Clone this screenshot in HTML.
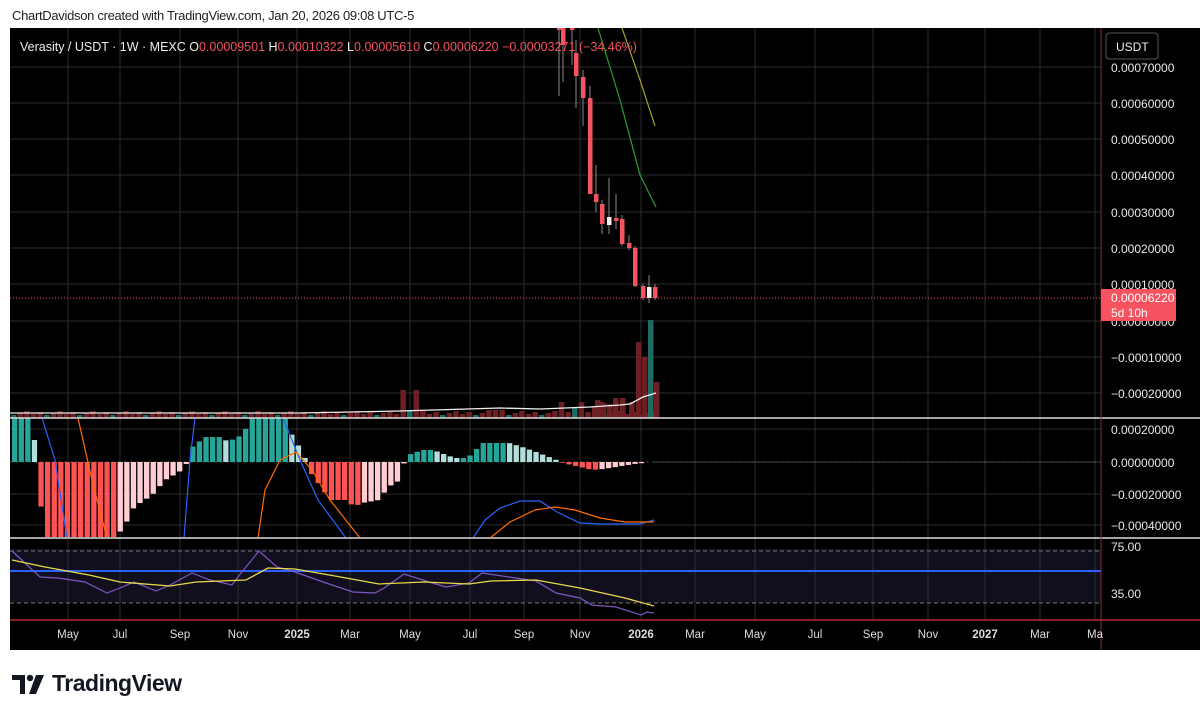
<!DOCTYPE html>
<html><head><meta charset="utf-8"><style>
html,body{margin:0;padding:0;background:#fff;width:1200px;height:716px;overflow:hidden;font-family:"Liberation Sans",sans-serif}
#hdr{position:absolute;left:12px;top:8px;font-size:13px;color:#222;letter-spacing:-0.3px}
#chart{position:absolute;left:10px;top:28px}
#logo{position:absolute;left:12px;top:670px;display:flex;align-items:center}
#logo span{font-size:23px;font-weight:bold;color:#131722;margin-left:6px;letter-spacing:-0.5px}
</style></head><body>
<div id="hdr">ChartDavidson created with TradingView.com, Jan 20, 2026 09:08 UTC-5</div>
<svg id="chart" width="1190" height="622" viewBox="10 28 1190 622" xmlns="http://www.w3.org/2000/svg" font-family="Liberation Sans, sans-serif">
<rect x="10" y="28" width="1190" height="622" fill="#000"/>
<rect x="10" y="549" width="1091" height="54" fill="#110f1e"/>
<g id="grid" stroke="#2c2c2c" stroke-width="1"></g>
<g id="vol"></g>
<g id="candles"></g>
<polyline points="598,28 620,100 640,175 656,207" fill="none" stroke="#2e9e2e" stroke-width="1.2"/>
<polyline points="622,28 640,80 655,126" fill="none" stroke="#a8a030" stroke-width="1.2"/>
<line x1="10" y1="298" x2="1101" y2="298" stroke="#f7525f" stroke-dasharray="1,2" stroke-width="1"/>
<g id="macd"></g>
<g id="rsi"></g>
<line x1="10" y1="418" x2="1200" y2="418" stroke="#ddd" stroke-width="1.5"/>
<line x1="10" y1="538" x2="1200" y2="538" stroke="#ddd" stroke-width="1.5"/>
<line x1="10" y1="620" x2="1200" y2="620" stroke="#8a1f28" stroke-width="2"/>
<line x1="1101" y1="28" x2="1101" y2="650" stroke="#8a2a30" stroke-width="1"/>
<g font-size="12" fill="#e8e8e8">
<text x="1111" y="72">0.00070000</text>
<text x="1111" y="108">0.00060000</text>
<text x="1111" y="144">0.00050000</text>
<text x="1111" y="180">0.00040000</text>
<text x="1111" y="217">0.00030000</text>
<text x="1111" y="253">0.00020000</text>
<text x="1111" y="289">0.00010000</text>
<text x="1111" y="326">0.00000000</text>
<text x="1111" y="362">−0.00010000</text>
<text x="1111" y="398">−0.00020000</text>
<text x="1111" y="434">0.00020000</text>
<text x="1111" y="467">0.00000000</text>
<text x="1111" y="499">−0.00020000</text>
<text x="1111" y="530">−0.00040000</text>
<text x="1111" y="551">75.00</text>
<text x="1111" y="598">35.00</text>
</g>
<rect x="1101" y="289" width="75" height="32" fill="#f7525f"/>
<text x="1111" y="302" font-size="12" fill="#fff">0.00006220</text>
<text x="1111" y="317" font-size="12" fill="#fff">5d 10h</text>
<rect x="1106" y="33" width="52" height="26" rx="3" fill="#000" stroke="#555"/>
<text x="1116" y="51" font-size="12" fill="#eee">USDT</text>
<g font-size="11.5" fill="#ddd" text-anchor="middle">
<text x="68" y="638">May</text><text x="120" y="638">Jul</text><text x="180" y="638">Sep</text><text x="238" y="638">Nov</text>
<text x="297" y="638" font-weight="bold">2025</text><text x="350" y="638">Mar</text><text x="410" y="638">May</text><text x="470" y="638">Jul</text>
<text x="524" y="638">Sep</text><text x="580" y="638">Nov</text><text x="641" y="638" font-weight="bold">2026</text><text x="695" y="638">Mar</text>
<text x="755" y="638">May</text><text x="815" y="638">Jul</text><text x="873" y="638">Sep</text><text x="928" y="638">Nov</text>
<text x="985" y="638" font-weight="bold">2027</text><text x="1040" y="638">Mar</text><text x="1095" y="638">Ma</text>
</g>
<text x="20" y="51" font-size="12.5" fill="#eee">Verasity / USDT · 1W · MEXC  <tspan>O</tspan><tspan fill="#f7525f">0.00009501</tspan>  H<tspan fill="#f7525f">0.00010322</tspan>  L<tspan fill="#f7525f">0.00005610</tspan>  C<tspan fill="#f7525f">0.00006220</tspan>  <tspan fill="#f7525f">−0.00003271 (−34.46%)</tspan></text>
</svg>
<div id="logo">
<svg width="34" height="22" viewBox="0 0 34 22"><path d="M0 2h13v19H8V7H0z" fill="#131722"/><circle cx="18" cy="5" r="3.2" fill="#131722"/><path d="M24 2h8l-8 19h-7z" fill="#131722"/></svg>
<span>TradingView</span>
</div>
<script>
const NS="http://www.w3.org/2000/svg";
function el(p,t,a){const e=document.createElementNS(NS,t);for(const k in a)e.setAttribute(k,a[k]);document.getElementById(p).appendChild(e);return e;}
const vx=[68,120,180,238,297,350,410,470,524,580,641,695,755,815,873,928,985,1040,1095];
vx.forEach(x=>el("grid","line",{x1:x,y1:28,x2:x,y2:620}));
[67,103,139,175,212,248,284,321,357,393,429,494,525].forEach(y=>el("grid","line",{x1:10,y1:y,x2:1101,y2:y}));
el("grid","line",{x1:10,y1:462,x2:1101,y2:462,"stroke-dasharray":"3,3",stroke:"#444"});
el("grid","line",{x1:10,y1:551,x2:1101,y2:551,"stroke-dasharray":"4,3",stroke:"#777"});
el("grid","line",{x1:10,y1:603,x2:1101,y2:603,"stroke-dasharray":"4,3",stroke:"#777"});
el("grid","line",{x1:10,y1:571,x2:1101,y2:571,stroke:"#2962ff","stroke-width":2});
const C=[[557,28,30,28,96,0],[561,28,45,28,82,0],[570,28,30,28,65,0],[574,53,76,40,108,0],[581,77,98,70,126,0],[588,98,194,86,194,0],[594,194,202,165,212,0],[600,204,224,200,234,0],[607,217,225,178,234,1],[614,218,221,194,229,0],[620,219,244,215,246,0],[627,243,248,235,250,0],[633,248,286,246,287,0],[641,286,298,284,300,0],[647,287,298,275,303,1],[653,287,298,284,300,0]];
C.forEach(c=>{const col=c[5]?"#f0f0f0":"#f7525f";el("candles","line",{x1:c[0]+2,y1:c[3],x2:c[0]+2,y2:c[4],stroke:"#888","stroke-width":1});el("candles","rect",{x:c[0],y:c[1],width:4.5,height:Math.max(1,c[2]-c[1]),fill:col});});
for(let i=0;i<98;i++){const x=11+i*6.6;let h=3+((i*37)%5);if(x>395&&x<415)h=(i%2)?28:8;if(x>480&&x<500)h=8;if(x>555&&x<600)h=6+(i%3)*5;const teal=(i*7)%5===0;el("vol","rect",{x:x,y:418-h,width:5.5,height:h,fill:teal?"#1e6b64":"#6e1f23"});}
[[595,18],[601,15],[607,14],[613,20],[620,20],[629,16],[636,76],[642,61],[648,98,1],[654,36]].forEach(v=>el("vol","rect",{x:v[0],y:418-v[1],width:5.5,height:v[1],fill:v[2]?"#1e6b64":"#6e1f23"}));
el("vol","polyline",{points:"10,413 300,413 400,411 500,408 540,409 590,407 620,405 630,404 643,397 656,393",fill:"none",stroke:"#eee","stroke-width":1.3});
const K=[[11,44],[30,44],[31,22],[37,22],[38,-23],[45,-75],[116,-75],[125,-63],[134,-45],[152,-33],[165,-18],[179,-10],[187,-1],[192,15],[205,25],[221,25],[228,20],[237,25],[243,27],[250,44],[286,44],[290,30],[297,19],[306,2],[310,-10],[321,-25],[330,-38],[348,-38],[353,-45],[362,-41],[379,-38],[388,-25],[400,-18],[404,-1],[408,7],[422,12],[433,12],[446,7],[455,4],[464,4],[471,7],[482,19],[509,19],[522,15],[536,10],[554,3],[563,-1],[580,-5],[592,-8],[603,-7],[616,-5],[634,-2],[652,0]];
function val(x){for(let i=0;i<K.length-1;i++){if(x>=K[i][0]&&x<=K[i+1][0]){const t=(x-K[i][0])/(K[i+1][0]-K[i][0]||1);return K[i][1]+t*(K[i+1][1]-K[i][1]);}}return 0;}
let prev=0;
for(let i=0;i<97;i++){const x=12+i*6.6;const v=val(x+2.5);let col;if(v>=0)col=(v>=prev)?"#26a69a":"#b2dfdb";else col=(v<=prev)?"#ff5252":"#ffcdd2";prev=v;const h=Math.abs(v);if(h<0.5){continue;}el("macd","rect",{x:x,y:v>0?462-v:462,width:5.3,height:h,fill:col});}
el("macd","line",{x1:655,y1:462,x2:1101,y2:462,stroke:"#555","stroke-dasharray":"3,3"});
const cp=el("macd","clipPath",{id:"mc"});const r=document.createElementNS(NS,"rect");r.setAttribute("x",10);r.setAttribute("y",419);r.setAttribute("width",1090);r.setAttribute("height",118);cp.appendChild(r);
["42,418 55,460 67,538","184,538 190,460 195,418","283,418 300,460 318,500 346,538","473,538 485,520 500,508 520,501 540,501 557,512 580,523 600,524 640,524 654,520"].forEach(p=>el("macd","polyline",{points:p,fill:"none",stroke:"#2962ff","stroke-width":1.2,"clip-path":"url(#mc)"}));
["78,418 92,480 107,538","258,538 265,490 280,460 296,452 312,470 330,500 360,538","490,538 510,522 535,510 555,507 575,510 600,518 625,522 654,522"].forEach(p=>el("macd","polyline",{points:p,fill:"none",stroke:"#ff6d00","stroke-width":1.2,"clip-path":"url(#mc)"}));
el("rsi","polyline",{points:"12,551 40,577 58,578 85,582 107,593 120,588 134,582 156,591 170,585 192,573 210,580 232,585 241,573 259,551 277,567 295,572 326,583 353,592 375,593 384,588 404,574 429,582 446,587 469,583 482,573 509,577 536,581 556,593 580,598 592,605 616,607 641,615 647,612 654,613",fill:"none",stroke:"#7e57c2","stroke-width":1.2});
el("rsi","polyline",{points:"12,560 45,567 89,575 120,582 170,586 196,582 246,580 268,568 295,569 335,576 379,584 424,582 469,584 491,581 536,580 580,588 625,598 654,606",fill:"none",stroke:"#e8d84a","stroke-width":1.3});
</script>
</body></html>
